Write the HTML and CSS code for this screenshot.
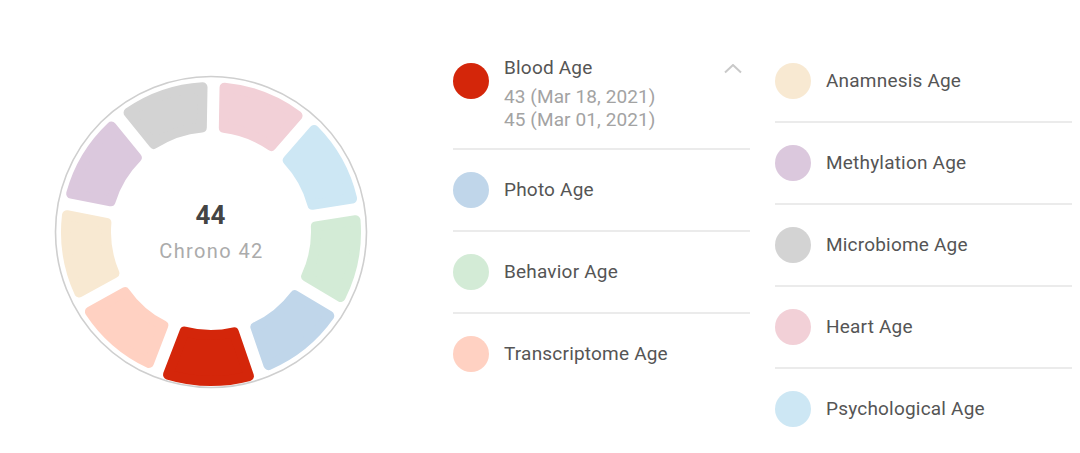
FILE: index.html
```html
<!DOCTYPE html>
<html lang="en">
<head>
<meta charset="utf-8">
<title>Biological Ages</title>
<link rel="stylesheet" href="styles.css">
</head>
<body>
<div class="page">
  <div class="chart">
    <svg class="donut" width="320" height="320" viewBox="0 0 320 320">
      <defs>
        <path id="seg" d="M120.89 20.38 A145 145 0 0 1 199.11 20.38 L185.38 58.11 A105 105 0 0 0 134.62 58.11 Z"/>
        <path id="segBig" d="M119.52 16.61 A149 149 0 0 1 200.48 16.61 L184.69 60.00 A103 103 0 0 0 135.31 60.00 Z"/>
      </defs>
      <circle class="ring" cx="160" cy="160" r="155.5"/>
      <g class="segs">
        <use href="#seg" class="c-heart" transform="rotate(21 160 160)"/>
        <use href="#seg" class="c-psych" transform="rotate(61 160 160)"/>
        <use href="#seg" class="c-behavior" transform="rotate(101 160 160)"/>
        <use href="#seg" class="c-photo" transform="rotate(141 160 160)"/>
        <use href="#segBig" class="c-blood" transform="rotate(181 160 160)"/>
        <use href="#seg" class="c-trans" transform="rotate(221 160 160)"/>
        <use href="#seg" class="c-anam" transform="rotate(261 160 160)"/>
        <use href="#seg" class="c-meth" transform="rotate(301 160 160)"/>
        <use href="#seg" class="c-micro" transform="rotate(341 160 160)"/>
      </g>
      <text class="age" x="159.5" y="152">44</text>
      <text class="chrono" x="160.5" y="186">Chrono 42</text>
    </svg>
  </div>

  <div class="legend">
    <div class="col">
      <div class="row expanded">
        <span class="dot c-blood"></span>
        <div class="info">
          <div class="title">Blood Age</div>
          <div class="sub first">43 (Mar 18, 2021)</div>
          <div class="sub">45 (Mar 01, 2021)</div>
        </div>
        <svg class="chev" width="18" height="10" viewBox="0 0 18 10"><polyline points="1,8.5 9,1 17,8.5"/></svg>
      </div>
      <div class="row"><span class="dot c-photo"></span><div class="title">Photo Age</div></div>
      <div class="row"><span class="dot c-behavior"></span><div class="title">Behavior Age</div></div>
      <div class="row last"><span class="dot c-trans"></span><div class="title">Transcriptome Age</div></div>
    </div>
    <div class="col">
      <div class="row"><span class="dot c-anam"></span><div class="title">Anamnesis Age</div></div>
      <div class="row"><span class="dot c-meth"></span><div class="title">Methylation Age</div></div>
      <div class="row"><span class="dot c-micro"></span><div class="title">Microbiome Age</div></div>
      <div class="row"><span class="dot c-heart"></span><div class="title">Heart Age</div></div>
      <div class="row last"><span class="dot c-psych"></span><div class="title">Psychological Age</div></div>
    </div>
  </div>
</div>
</body>
</html>
```

FILE: styles.css
```css
html, body {
  margin: 0;
  padding: 0;
  background: #ffffff;
}

body {
  font-family: Roboto, "Liberation Sans", Arial, sans-serif;
  color: #555555;
}

.page {
  display: flex;
  align-items: flex-start;
  padding: 41px 0 0 51px;
  width: 1080px;
  height: 453px;
  box-sizing: border-box;
}

.chart {
  margin-top: 31px;
  width: 320px;
  height: 320px;
  flex: none;
}

.donut {
  display: block;
}

.ring {
  fill: none;
  stroke: #cfcfcf;
  stroke-width: 1.6;
}

.segs use {
  stroke-width: 10;
  stroke-linejoin: round;
}

.age {
  font-family: Roboto, "Liberation Sans", sans-serif;
  font-weight: 700;
  font-size: 26px;
  fill: #444444;
  text-anchor: middle;
}

.chrono {
  font-family: Roboto, "Liberation Sans", sans-serif;
  font-weight: 400;
  font-size: 20px;
  letter-spacing: 1.4px;
  fill: #ababab;
  text-anchor: middle;
}

/* colours */
.c-blood { fill: #d4260a; stroke: #d4260a; background: #d4260a; }
.c-photo { fill: #c0d6ea; stroke: #c0d6ea; background: #c0d6ea; }
.c-behavior { fill: #d3ebd6; stroke: #d3ebd6; background: #d3ebd6; }
.c-trans { fill: #ffd1c2; stroke: #ffd1c2; background: #ffd1c2; }
.c-anam { fill: #f8e9d2; stroke: #f8e9d2; background: #f8e9d2; }
.c-meth { fill: #dbc8dd; stroke: #dbc8dd; background: #dbc8dd; }
.c-micro { fill: #d3d3d3; stroke: #d3d3d3; background: #d3d3d3; }
.c-heart { fill: #f2d0d7; stroke: #f2d0d7; background: #f2d0d7; }
.c-psych { fill: #cde7f4; stroke: #cde7f4; background: #cde7f4; }

.legend {
  margin-left: 82px;
  display: grid;
  grid-template-columns: 297px 297px;
  column-gap: 25px;
  align-items: start;
}

.col {
  display: flex;
  flex-direction: column;
}

.row {
  position: relative;
  display: flex;
  align-items: center;
  gap: 15px;
  height: 80px;
  border-bottom: 2px solid #ebebeb;
}

.row.last {
  border-bottom: none;
}

.dot {
  display: block;
  width: 36px;
  height: 36px;
  border-radius: 50%;
  flex: none;
}

.title {
  font-size: 19px;
  line-height: 26px;
  letter-spacing: 0.2px;
  color: #555555;
}

.row.expanded {
  height: auto;
  align-items: flex-start;
}

.row.expanded .dot {
  margin-top: 22px;
}

.info {
  padding: 14px 0 17px;
}

.sub {
  font-size: 19px;
  line-height: 23px;
  letter-spacing: 0.1px;
  color: #a3a3a3;
}

.sub.first {
  margin-top: 4px;
}

.chev {
  position: absolute;
  top: 23px;
  right: 8px;
}

.chev polyline {
  fill: none;
  stroke: #c9c9c9;
  stroke-width: 2;
}
```
